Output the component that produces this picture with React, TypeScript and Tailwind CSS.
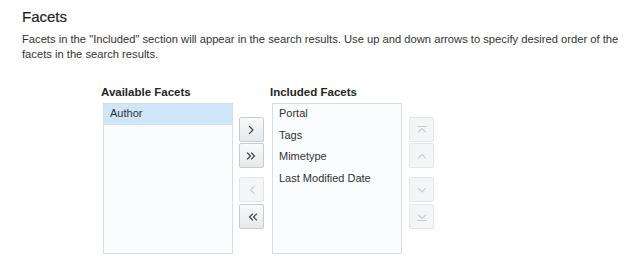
import React from 'react';

type IconName = 'right' | 'allRight' | 'left' | 'allLeft' | 'top' | 'up' | 'down' | 'bottom';

const Glyph: React.FC<{ name: IconName }> = ({ name }) => {
  const paths: Record<IconName, string> = {
    right: 'M5.5 4.5 L9 8 L5.5 11.5',
    allRight: 'M3.5 5 L6.5 8 L3.5 11 M7.5 5 L10.5 8 L7.5 11',
    left: 'M10 4.5 L6.5 8 L10 11.5',
    allLeft: 'M8.5 5 L5.5 8 L8.5 11 M12.5 5 L9.5 8 L12.5 11',
    top: 'M4 4.5 H12 M4.5 10 L8 6.5 L11.5 10',
    up: 'M4.5 10 L8 6.5 L11.5 10',
    down: 'M4.5 6.5 L8 10 L11.5 6.5',
    bottom: 'M4.5 6 L8 9.5 L11.5 6 M4 11.5 H12',
  };
  return (
    <svg width="16" height="16" viewBox="0 0 16 16" fill="none">
      <path d={paths[name]} stroke="currentColor" strokeWidth="1.2" strokeLinecap="square" />
    </svg>
  );
};

const ShuttleButton: React.FC<{ icon: IconName; disabled?: boolean }> = ({ icon, disabled }) => (
  <button
    type="button"
    disabled={disabled}
    className={
      disabled
        ? 'flex h-[25px] w-[25px] items-center justify-center rounded-[2px] border border-[#e2e6e9] bg-[#f4f5f6] text-[#c9ccce]'
        : 'flex h-[25px] w-[25px] items-center justify-center rounded-[2px] border border-[#c5cdd3] bg-gradient-to-b from-[#f9fafa] to-[#e6e8ea] text-[#3d4246]'
    }
  >
    <Glyph name={icon} />
  </button>
);

const ButtonColumn: React.FC<{ buttons: { icon: IconName; disabled?: boolean }[] }> = ({ buttons }) => (
  <div className="flex flex-col pt-[32px]">
    <div className="flex flex-col gap-[1px]">
      <ShuttleButton {...buttons[0]} />
      <ShuttleButton {...buttons[1]} />
    </div>
    <div className="mt-[9px] flex flex-col gap-[2px]">
      <ShuttleButton {...buttons[2]} />
      <ShuttleButton {...buttons[3]} />
    </div>
  </div>
);

const FacetList: React.FC<{ title: string; items: string[]; selected?: string }> = ({ title, items, selected }) => (
  <div className="flex flex-col">
    <div className="h-[18px] text-[11.5px] font-bold leading-[14px] text-[#252525]">{title}</div>
    <ul className="ml-[2px] h-[151px] w-[130px] border border-[#d6dde3] bg-[#fafcfd]">
      {items.map((item) => (
        <li
          key={item}
          className={
            item === selected
              ? 'h-[21px] bg-[#cfe5f8] pl-[6px] text-[11px] leading-[19px] text-[#333]'
              : 'h-[21.7px] pl-[6px] text-[11px] leading-[19px] text-[#333]'
          }
        >
          {item}
        </li>
      ))}
    </ul>
  </div>
);

export default function App() {
  return (
    <div className="h-[256px] w-[637px] overflow-hidden bg-white pl-[22px] pr-[12px] pt-[8px] font-['Liberation_Sans',Arial,sans-serif] text-[#333]">
      <h1 className="text-[15px] leading-[18px] text-[#1f1f1f] [-webkit-text-stroke:0.2px_#1f1f1f]">Facets</h1>
      <p className="mt-[6px] text-[11.2px] leading-[15px] text-[#333]">
        Facets in the "Included" section will appear in the search results. Use up and down arrows to specify desired order of the facets in the search results.
      </p>
      <div className="ml-[79px] mt-[23px] flex">
        <FacetList title="Available Facets" items={['Author']} selected="Author" />
        <div className="ml-[6px] mr-[6px]">
          <ButtonColumn
            buttons={[
              { icon: 'right' },
              { icon: 'allRight' },
              { icon: 'left', disabled: true },
              { icon: 'allLeft' },
            ]}
          />
        </div>
        <FacetList title="Included Facets" items={['Portal', 'Tags', 'Mimetype', 'Last Modified Date']} />
        <div className="ml-[7px]">
          <ButtonColumn
            buttons={[
              { icon: 'top', disabled: true },
              { icon: 'up', disabled: true },
              { icon: 'down', disabled: true },
              { icon: 'bottom', disabled: true },
            ]}
          />
        </div>
      </div>
    </div>
  );
}
